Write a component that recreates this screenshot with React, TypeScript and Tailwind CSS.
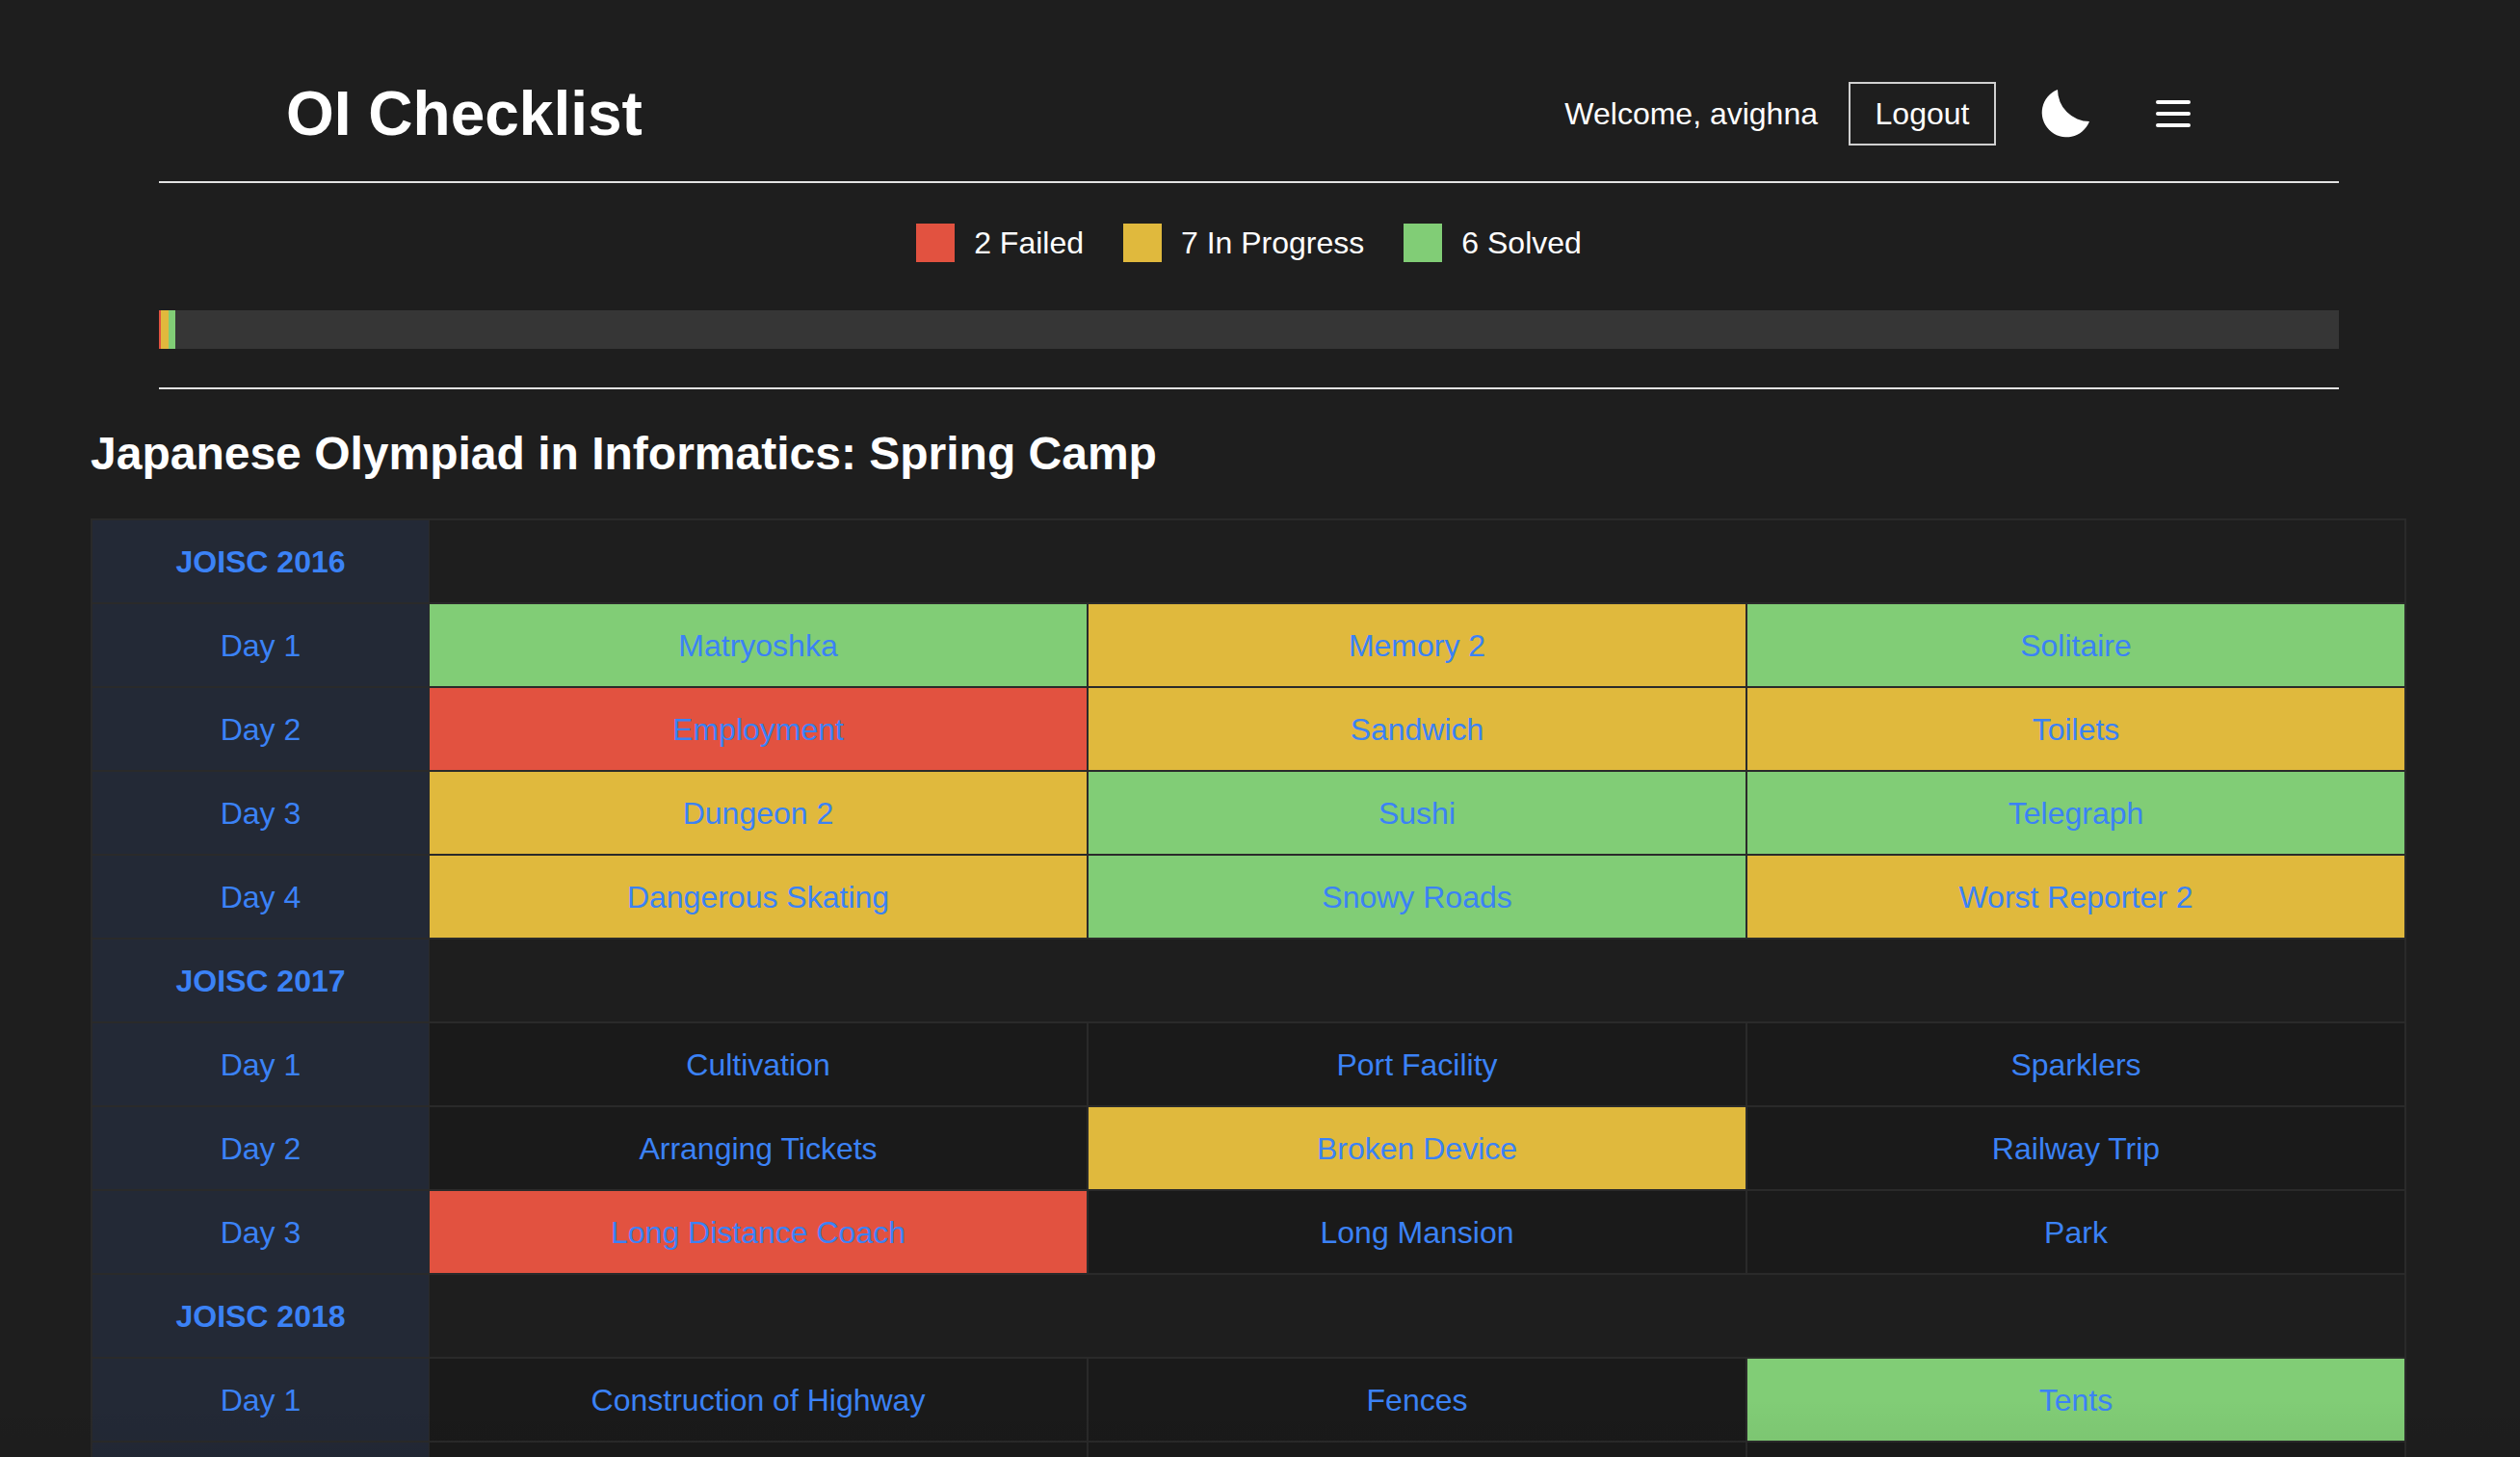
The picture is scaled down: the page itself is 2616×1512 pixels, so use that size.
import React from "react";

type Status = "s" | "p" | "f" | "n";
type Cell = [string, Status];
type Row = { label: string; head?: boolean; cells?: Cell[] };

const rows: Row[] = [
  { label: "JOISC 2016", head: true },
  { label: "Day 1", cells: [["Matryoshka", "s"], ["Memory 2", "p"], ["Solitaire", "s"]] },
  { label: "Day 2", cells: [["Employment", "f"], ["Sandwich", "p"], ["Toilets", "p"]] },
  { label: "Day 3", cells: [["Dungeon 2", "p"], ["Sushi", "s"], ["Telegraph", "s"]] },
  { label: "Day 4", cells: [["Dangerous Skating", "p"], ["Snowy Roads", "s"], ["Worst Reporter 2", "p"]] },
  { label: "JOISC 2017", head: true },
  { label: "Day 1", cells: [["Cultivation", "n"], ["Port Facility", "n"], ["Sparklers", "n"]] },
  { label: "Day 2", cells: [["Arranging Tickets", "n"], ["Broken Device", "p"], ["Railway Trip", "n"]] },
  { label: "Day 3", cells: [["Long Distance Coach", "f"], ["Long Mansion", "n"], ["Park", "n"]] },
  { label: "JOISC 2018", head: true },
  { label: "Day 1", cells: [["Construction of Highway", "n"], ["Fences", "n"], ["Tents", "s"]] },
  { label: "", cells: [["", "n"], ["", "n"], ["", "n"]] },
];

const bg: Record<Status, string> = {
  s: "bg-[#81cd76]",
  p: "bg-[#e0b93d]",
  f: "bg-[#e25240]",
  n: "bg-[#1a1a1a]",
};

function Legend({ color, text }: { color: string; text: string }) {
  return (
    <div className="flex items-center gap-5">
      <div className={`h-10 w-10 ${color}`} />
      <span>{text}</span>
    </div>
  );
}

export default function App() {
  return (
    <div className="relative h-[1512px] w-[2616px] overflow-hidden bg-[#1e1e1e] text-[32px] text-white font-['Liberation_Sans',Arial,sans-serif]">
      <div className="ml-[165px] w-[2263px]">
        <header className="flex h-[190px] items-center justify-between border-b-2 border-[#e2e2e2] pl-[132px] pr-[154px] pt-[48px]">
          <h1 className="text-[64px] font-bold leading-none">OI Checklist</h1>
          <div className="flex items-center">
            <span>Welcome, avighna</span>
            <button className="ml-8 h-[66px] w-[153px] border-2 border-[#d0d0d0] text-center">Logout</button>
            <svg className="ml-[47px] h-[50px] w-[50px]" viewBox="0 0 50 50" fill="white" aria-label="Dark mode">
              <path d="M17 0A25.5 25.5 0 1 0 50 33A33 33 0 0 1 17 0Z" />
            </svg>
            <svg className="ml-[69px] h-[28px] w-[36px]" viewBox="0 0 36 28" fill="white" aria-label="Menu">
              <rect x="0" y="0" width="36" height="4" rx="2" />
              <rect x="0" y="12" width="36" height="4" rx="2" />
              <rect x="0" y="24" width="36" height="4" rx="2" />
            </svg>
          </div>
        </header>

        <div className="mt-[42px] flex justify-center gap-[41px] leading-10">
          <Legend color="bg-[#e25240]" text="2 Failed" />
          <Legend color="bg-[#e0b93d]" text="7 In Progress" />
          <Legend color="bg-[#81cd76]" text="6 Solved" />
        </div>

        <div className="mt-[50px] flex h-10 bg-[#363636]">
          <div className="w-[2px] bg-[#e25240]" />
          <div className="w-[8px] bg-[#e0b93d]" />
          <div className="w-[7px] bg-[#81cd76]" />
        </div>

        <div className="mt-10 h-[2px] bg-[#e2e2e2]" />
      </div>

      <div className="ml-[94px] w-[2404px]">
        <h2 className="mt-[28px] text-[48px] font-bold leading-[78px]">
          Japanese Olympiad in Informatics: Spring Camp
        </h2>
        <table className="mt-[28px] w-[2404px] table-fixed border-separate border-spacing-0 border-2 border-b-0 border-[#2a2a2a] text-center text-[#3b82f6]">
          <colgroup>
            <col className="w-[350px]" />
            <col className="w-[684px]" />
            <col className="w-[684px]" />
            <col className="w-[682px]" />
          </colgroup>
          <tbody>
            {rows.map((row, i) => (
              <tr key={i}>
                <td
                  className={`h-[87px] border-b-2 border-r border-[#2a2a2a] bg-[#232936] p-0 ${
                    row.head ? "font-bold" : ""
                  }`}
                >
                  {row.label}
                </td>
                {row.head ? (
                  <td colSpan={3} className="h-[87px] border-b-2 border-[#2a2a2a] bg-[#1e1e1e] p-0" />
                ) : (
                  row.cells!.map(([name, status], j) => (
                    <td
                      key={j}
                      className={`h-[87px] border-b-2 border-[#2a2a2a] p-0 ${bg[status]} ${
                        j < 2 ? "border-r-2" : ""
                      }`}
                    >
                      {name}
                    </td>
                  ))
                )}
              </tr>
            ))}
          </tbody>
        </table>
      </div>

      <div className="pointer-events-none absolute bottom-0 left-0 h-[60px] w-full bg-gradient-to-b from-transparent to-black/5" />
    </div>
  );
}
